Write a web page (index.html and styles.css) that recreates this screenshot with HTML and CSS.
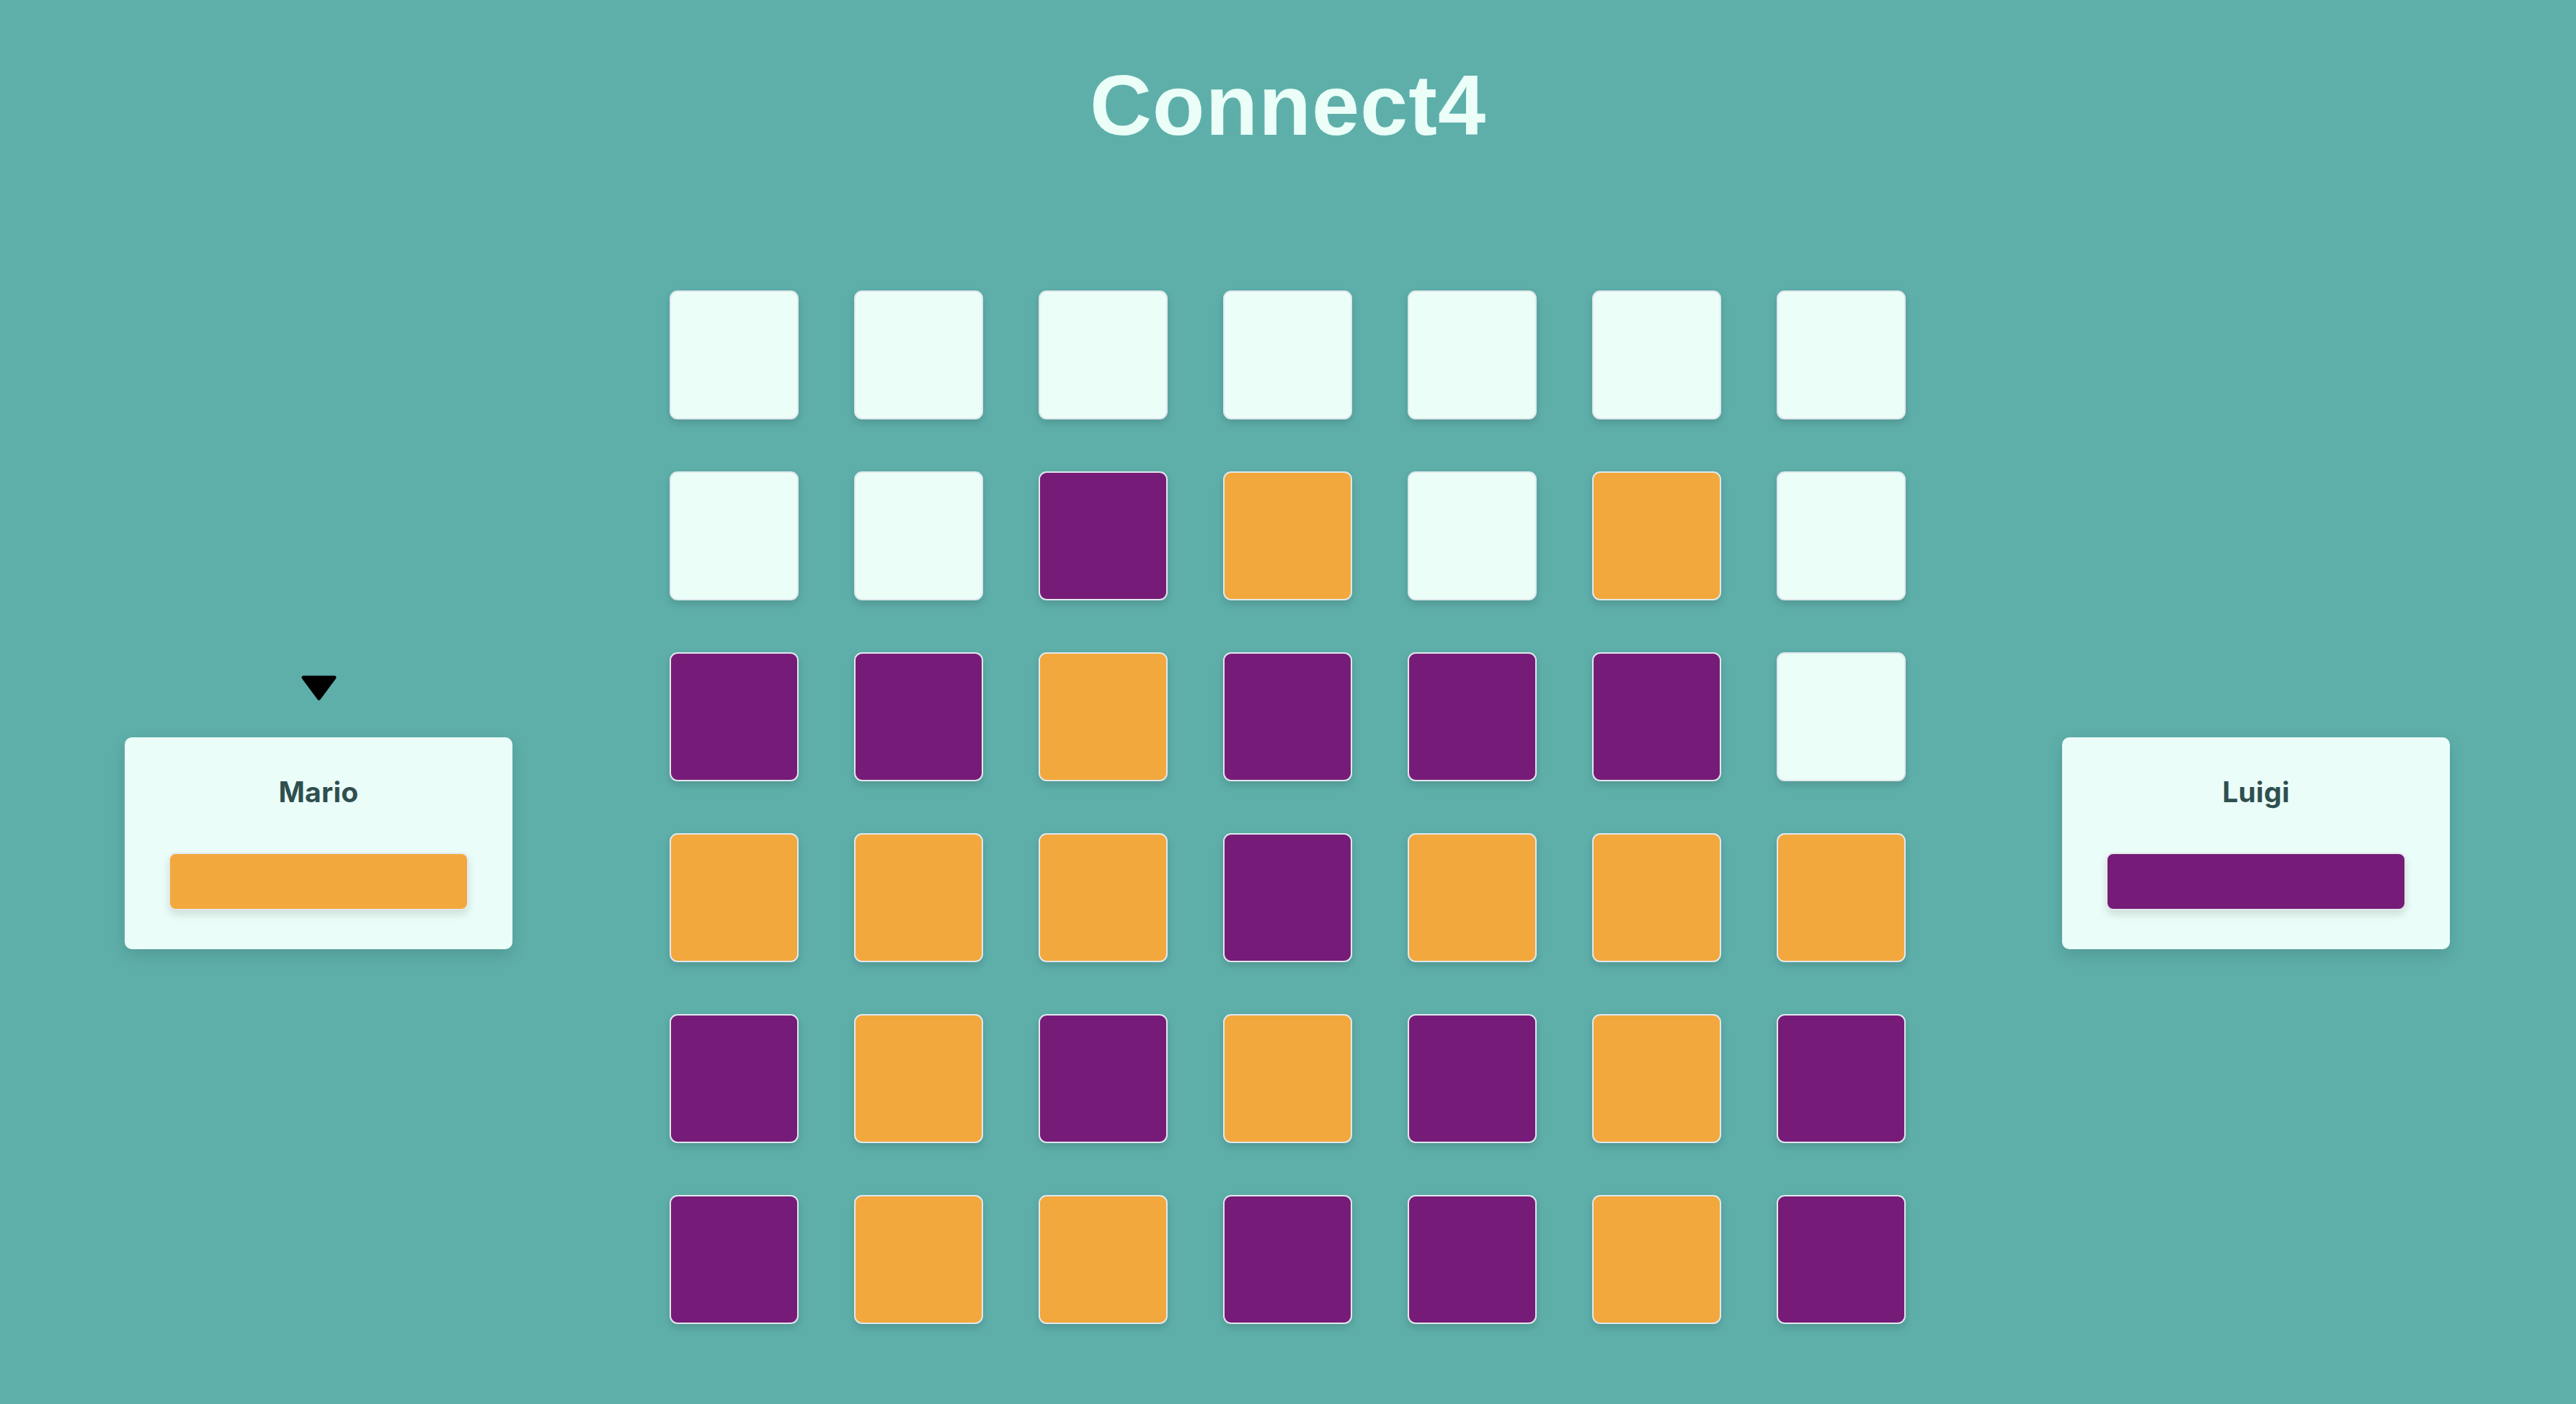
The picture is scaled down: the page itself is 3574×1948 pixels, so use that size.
FILE: index.html
```html
<!DOCTYPE html>
<html lang="en">
<head>
<meta charset="utf-8">
<title>Connect4</title>
<link rel="stylesheet" href="styles.css">
</head>
<body>
<div class="app">
  <h1 class="title">Connect4</h1>
  <main class="game">
    <section class="player">
      <div class="turn">
        <svg class="turn-icon" width="49" height="35" viewBox="0 0 49 35"><polygon points="3,3 46,3 24.5,32" fill="#000" stroke="#000" stroke-width="5" stroke-linejoin="round"/></svg>
      </div>
      <div class="card">
        <div class="name">Mario</div>
        <div class="chip chip-orange"></div>
      </div>
    </section>

    <section class="board">
      <div class="cell"></div><div class="cell"></div><div class="cell"></div><div class="cell"></div><div class="cell"></div><div class="cell"></div><div class="cell"></div>
      <div class="cell"></div><div class="cell"></div><div class="cell p"></div><div class="cell o"></div><div class="cell"></div><div class="cell o"></div><div class="cell"></div>
      <div class="cell p"></div><div class="cell p"></div><div class="cell o"></div><div class="cell p"></div><div class="cell p"></div><div class="cell p"></div><div class="cell"></div>
      <div class="cell o"></div><div class="cell o"></div><div class="cell o"></div><div class="cell p"></div><div class="cell o"></div><div class="cell o"></div><div class="cell o"></div>
      <div class="cell p"></div><div class="cell o"></div><div class="cell p"></div><div class="cell o"></div><div class="cell p"></div><div class="cell o"></div><div class="cell p"></div>
      <div class="cell p"></div><div class="cell o"></div><div class="cell o"></div><div class="cell p"></div><div class="cell p"></div><div class="cell o"></div><div class="cell p"></div>
    </section>

    <section class="player">
      <div class="turn"></div>
      <div class="card">
        <div class="name">Luigi</div>
        <div class="chip chip-purple"></div>
      </div>
    </section>
  </main>
</div>
</body>
</html>
```

FILE: styles.css
```css
* { box-sizing: border-box; }

html, body {
  margin: 0;
  padding: 0;
}

body {
  background: #5eafaa;
  font-family: Inter, "Liberation Sans", Arial, sans-serif;
  width: 3574px;
  height: 1948px;
  overflow: hidden;
}

.app {
  display: flex;
  flex-direction: column;
  align-items: center;
  padding-top: 86px;
}

.title {
  margin: 0;
  font-family: "Liberation Sans", Arial, sans-serif;
  font-size: 119px;
  line-height: 1;
  font-weight: 700;
  letter-spacing: 1px;
  color: #ebfef8;
  height: 118px;
}

.game {
  margin-top: 199px;
  align-self: stretch;
  display: flex;
  align-items: center;
  justify-content: space-between;
  padding: 0 175px 0 173px;
}

.player {
  width: 538px;
  flex: none;
  display: flex;
  flex-direction: column;
}

.turn {
  height: 99px;
  display: flex;
  justify-content: center;
  padding-top: 13px;
}

.turn-icon { display: block; }

.card {
  background: #ebfdf8;
  border-radius: 10px;
  height: 294px;
  padding: 52px 61px 0;
  box-shadow: 0 8px 22px rgba(0, 0, 0, 0.13);
}

.name {
  text-align: center;
  font-size: 39px;
  font-weight: 700;
  letter-spacing: 0.3px;
  color: #2f4f4f;
  line-height: 47px;
  margin-bottom: 61px;
}

.chip {
  height: 80px;
  border-radius: 10px;
  border: 2px solid #e3e8ec;
  box-shadow: 0 6px 12px rgba(0, 0, 0, 0.12);
}

.chip-orange { background: #f2a83d; }
.chip-purple { background: #761c78; }

.board {
  flex: none;
  display: grid;
  grid-template-columns: repeat(7, 179px);
  grid-auto-rows: 179px;
  column-gap: 77px;
  row-gap: 72px;
}

.cell {
  background: #ebfef8;
  border: 2px solid #e2e8ec;
  border-radius: 11px;
  box-shadow: 0 5px 12px rgba(0, 0, 0, 0.14);
}

.cell.o { background: #f2a83d; }
.cell.p { background: #761c78; }
```
